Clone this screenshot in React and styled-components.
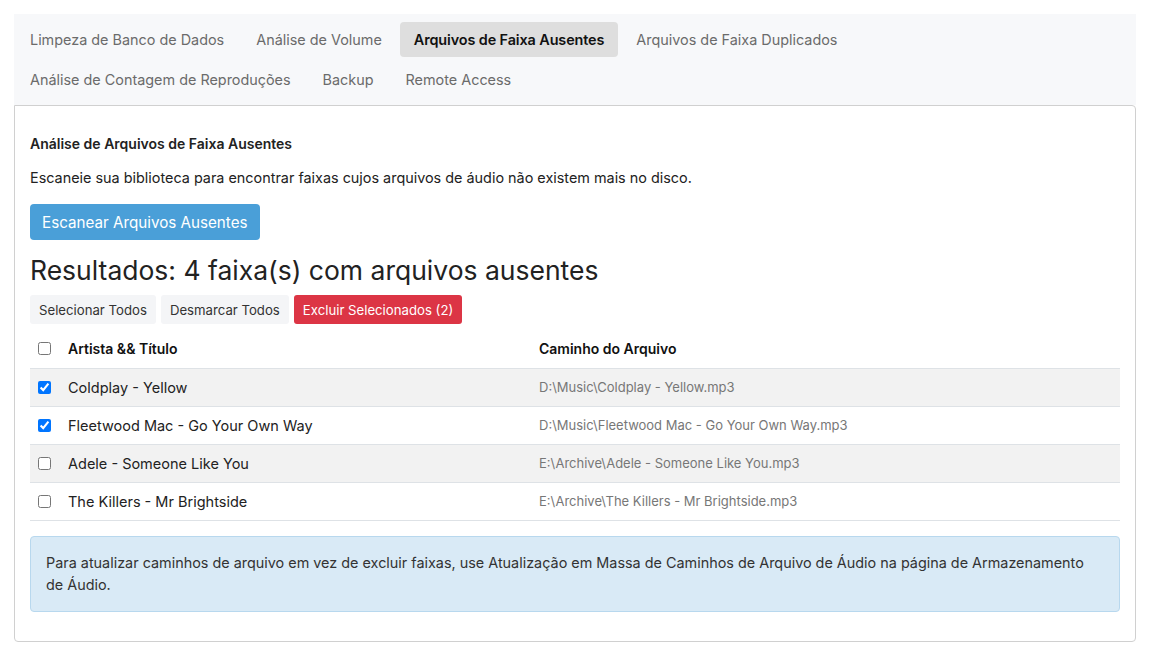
import React, { useState } from "react";
import styled, { createGlobalStyle } from "styled-components";

const GlobalStyle = createGlobalStyle`
  body {
    margin: 14px;
    background: #fff;
    font-family: Inter, "Noto Sans", sans-serif;
    color: #222;
  }
  * { box-sizing: border-box; }
`;

const Page = styled.div`
  width: 1122px;
`;

const TabBar = styled.div`
  display: flex;
  flex-wrap: wrap;
  gap: 5px 4px;
  padding: 8px 0 8px 2px;
  background: #f7f8fa;
`;

const Tab = styled.button`
  border: none;
  background: ${(p) => (p.$active ? "#dedede" : "transparent")};
  color: ${(p) => (p.$active ? "#111" : "#6b6b6b")};
  font-family: inherit;
  font-size: 14.4px;
  font-weight: ${(p) => (p.$active ? 600 : 400)};
  letter-spacing: ${(p) => (p.$active ? "-0.1px" : "0")};
  height: 35px;
  padding: 0 14px;
  border-radius: 4px;
  cursor: pointer;
`;

const Panel = styled.div`
  border: 1px solid #d0d0d0;
  border-radius: 0 4px 4px 4px;
  padding: 13px 15px 29px 15px;
`;

const Heading = styled.h4`
  margin: 15px 0 0;
  font-size: 14px;
  font-weight: 600;
  line-height: 20px;
  color: #222;
`;

const Text = styled.p`
  margin: 14px 0 0;
  font-size: 14.4px;
  line-height: 20px;
  color: #222;
`;

const ScanButton = styled.button`
  margin-top: 16px;
  height: 36px;
  padding: 0 12px;
  border: none;
  border-radius: 4px;
  background: #4a9fd8;
  color: #fff;
  font-family: inherit;
  font-size: 15.2px;
`;

const Results = styled.h2`
  margin: 14px 0 0;
  font-size: 26.5px;
  font-weight: 400;
  line-height: 32px;
  color: #222;
`;

const Actions = styled.div`
  display: flex;
  gap: 5px;
  margin-top: 9px;
`;

const SmallButton = styled.button`
  height: 29px;
  padding: 0 9px;
  border: none;
  border-radius: 3px;
  background: ${(p) => (p.$danger ? "#dc3545" : "#f4f5f7")};
  color: ${(p) => (p.$danger ? "#fff" : "#333")};
  font-family: inherit;
  font-size: 13.2px;
`;

const Table = styled.table`
  width: 100%;
  margin-top: 6px;
  border-collapse: collapse;
  table-layout: fixed;
`;

const Row = styled.tr`
  height: 38px;
  border-bottom: 1px solid #dee2e6;
  background: ${(p) => (p.$striped ? "#f2f2f2" : "transparent")};
`;

const CheckCell = styled.td`
  width: 30px;
  padding: 0 0 0 8px;
  vertical-align: middle;
`;

const HeadCell = styled.th`
  text-align: left;
  padding: 0 8px;
  font-size: 14px;
  font-weight: 600;
  color: #111;
  width: ${(p) => p.$w || "auto"};
`;

const TitleCell = styled.td`
  padding: 0 8px;
  font-size: 14.5px;
  color: #222;
`;

const PathCell = styled.td`
  padding: 0 8px;
  font-size: 13px;
  color: #777;
`;

const Check = styled.input`
  margin: 0;
  width: 13px;
  height: 13px;
  display: block;
`;

const Info = styled.div`
  margin-top: 15px;
  padding: 15px 18px 15px 15px;
  background: #d9eaf6;
  border: 1px solid #b8d8ee;
  border-radius: 4px;
  font-size: 14.4px;
  line-height: 22px;
  color: #333;
`;

const tabs = [
  "Limpeza de Banco de Dados",
  "Análise de Volume",
  "Arquivos de Faixa Ausentes",
  "Arquivos de Faixa Duplicados",
  "Análise de Contagem de Reproduções",
  "Backup",
  "Remote Access",
];

const tracks = [
  { title: "Coldplay - Yellow", path: "D:\\Music\\Coldplay - Yellow.mp3", checked: true },
  { title: "Fleetwood Mac - Go Your Own Way", path: "D:\\Music\\Fleetwood Mac - Go Your Own Way.mp3", checked: true },
  { title: "Adele - Someone Like You", path: "E:\\Archive\\Adele - Someone Like You.mp3", checked: false },
  { title: "The Killers - Mr Brightside", path: "E:\\Archive\\The Killers - Mr Brightside.mp3", checked: false },
];

export default function App() {
  const [checked, setChecked] = useState(tracks.map((t) => t.checked));
  const count = checked.filter(Boolean).length;

  const toggle = (i) => {
    setChecked(checked.map((c, j) => (j === i ? !c : c)));
  };

  return (
    <Page>
      <GlobalStyle />
      <TabBar>
        {tabs.map((t) => (
          <Tab key={t} $active={t === "Arquivos de Faixa Ausentes"}>
            {t}
          </Tab>
        ))}
      </TabBar>
      <Panel>
        <Heading>Análise de Arquivos de Faixa Ausentes</Heading>
        <Text>Escaneie sua biblioteca para encontrar faixas cujos arquivos de áudio não existem mais no disco.</Text>
        <ScanButton>Escanear Arquivos Ausentes</ScanButton>
        <Results>Resultados: {tracks.length} faixa(s) com arquivos ausentes</Results>
        <Actions>
          <SmallButton onClick={() => setChecked(tracks.map(() => true))}>Selecionar Todos</SmallButton>
          <SmallButton onClick={() => setChecked(tracks.map(() => false))}>Desmarcar Todos</SmallButton>
          <SmallButton $danger>Excluir Selecionados ({count})</SmallButton>
        </Actions>
        <Table>
          <thead>
            <Row>
              <CheckCell as="th">
                <Check type="checkbox" checked={count === tracks.length} readOnly />
              </CheckCell>
              <HeadCell $w="471px">Artista &amp;&amp; Título</HeadCell>
              <HeadCell>Caminho do Arquivo</HeadCell>
            </Row>
          </thead>
          <tbody>
            {tracks.map((t, i) => (
              <Row key={t.title} $striped={i % 2 === 0}>
                <CheckCell>
                  <Check type="checkbox" checked={checked[i]} onChange={() => toggle(i)} />
                </CheckCell>
                <TitleCell>{t.title}</TitleCell>
                <PathCell>{t.path}</PathCell>
              </Row>
            ))}
          </tbody>
        </Table>
        <Info>
          Para atualizar caminhos de arquivo em vez de excluir faixas, use Atualização em Massa de Caminhos de Arquivo de Áudio na página de Armazenamento de Áudio.
        </Info>
      </Panel>
    </Page>
  );
}
